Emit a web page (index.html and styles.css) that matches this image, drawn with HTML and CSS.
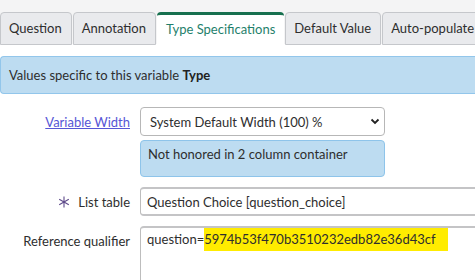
FILE: index.html
```html
<!DOCTYPE html>
<html lang="en">
<head>
  <meta charset="UTF-8" />
  <title>Variable - Type Specifications</title>
  <link rel="stylesheet" href="styles.css">
</head>
<body>
  <!-- Tab strip -->
  <div class="tab-strip">
    <div class="tab">Question</div>
    <div class="tab">Annotation</div>
    <div class="tab active">Type Specifications</div>
    <div class="tab">Default Value</div>
    <div class="tab">Auto-populate</div>
  </div>

  <div class="section-note">Values specific to this variable <b>Type</b></div>

  <!-- Form -->
  <div class="form">
    <div class="row">
      <label class="label"><a href="#">Variable Width</a></label>
      <div class="field narrow">
        <div class="select">
          <span>System Default Width (100) %</span>
          <svg width="10" height="7" viewBox="0 0 10 7"><path d="M1.5 1.5 L5 5 L8.5 1.5" fill="none" stroke="#222" stroke-width="1.8"/></svg>
        </div>
        <div class="hint">Not honored in 2 column container</div>
      </div>
    </div>

    <div class="row">
      <label class="label">
        <svg class="mandatory" width="12" height="12" viewBox="0 0 12 12">
          <path d="M6 0.5 V11.5 M1.2 3.2 L10.8 8.8 M1.2 8.8 L10.8 3.2" stroke="#5f4b8b" stroke-width="1.1"/>
        </svg>
        List table
      </label>
      <div class="field">
        <div class="input">Question Choice [question_choice]</div>
      </div>
    </div>

    <div class="row">
      <label class="label">Reference qualifier</label>
      <div class="field">
        <div class="textarea">question=<span class="mark">5974b53f470b3510232edb82e36d43cf</span></div>
      </div>
    </div>
  </div>
</body>
</html>
```

FILE: styles.css
```css
/* Base */
* {
  box-sizing: border-box;
  margin: 0;
  padding: 0;
}
body {
  background: #fff;
  color: #2e2e2e;
  font-family: Lato, 'Open Sans', sans-serif;
  font-size: 13px;
  overflow: hidden;
  width: 475px;
  height: 280px;
}

/* Tabs */
.tab-strip {
  display: flex;
  gap: 1px;
  padding-top: 12px;
  background: linear-gradient(#f4f4f5 0, #f4f4f5 44px, #fff 44px);
  white-space: nowrap;
  overflow: hidden;
}
.tab {
  flex: 0 0 auto;
  height: 33px;
  line-height: 31px;
  padding: 0 9px 0 8px;
  background: #e9eaed;
  border: 1px solid #c5c7cb;
  border-radius: 4px 4px 0 0;
  color: #2e2e2e;
}
.tab.active {
  background: #fff;
  border: none;
  border-top: 3px solid #17704f;
  color: #1f7f6c;
  padding: 0 9px;
  line-height: 29px;
}

/* Section note */
.section-note {
  margin-top: 11px;
  height: 38px;
  line-height: 36px;
  padding-left: 8px;
  background: #bddcf1;
  border: 1px solid #92c6eb;
  border-right: none;
  border-radius: 4px 0 0 4px;
}
.section-note b {
  font-weight: bold;
  color: #222;
}

/* Form rows */
.form {
  padding-top: 13px;
}
.row {
  display: flex;
  gap: 10px;
  margin-bottom: 10px;
}
.label {
  flex: 0 0 130px;
  display: flex;
  align-items: center;
  justify-content: flex-end;
  align-self: flex-start;
  height: 29px;
  gap: 8px;
  text-align: right;
}
.label a {
  color: #5656d6;
  text-decoration: underline;
}
.field {
  flex: 1;
  min-width: 345px;
}
.field.narrow {
  flex: 0 0 245px;
  min-width: 0;
}

.select {
  display: flex;
  align-items: center;
  justify-content: space-between;
  height: 29px;
  padding: 0 4px 0 9px;
  border: 1px solid #b7b7b7;
  border-radius: 4px;
  background: #fff;
}
.hint {
  margin-top: 4px;
  height: 37px;
  padding: 5px 7px;
  background: #bddcf1;
  border: 1px solid #8ec4ea;
  border-radius: 4px;
}

.input {
  height: 29px;
  line-height: 26px;
  padding-left: 6px;
  border: 1px solid #bdbdbd;
  border-top: 2px solid #c4c4c6;
  border-bottom: 2px solid #c4c4c6;
  border-right: none;
  border-radius: 4px 0 0 4px;
}
.textarea {
  height: 70px;
  padding: 0 6px;
  border: 1px solid #bdbdbd;
  border-top: 2px solid #c4c4c6;
  border-right: none;
  border-radius: 4px 0 0 0;
  line-height: 23px;
}
.mark {
  display: inline-block;
  height: 23px;
  background: #ffec00;
  padding-right: 12px;
}
```
